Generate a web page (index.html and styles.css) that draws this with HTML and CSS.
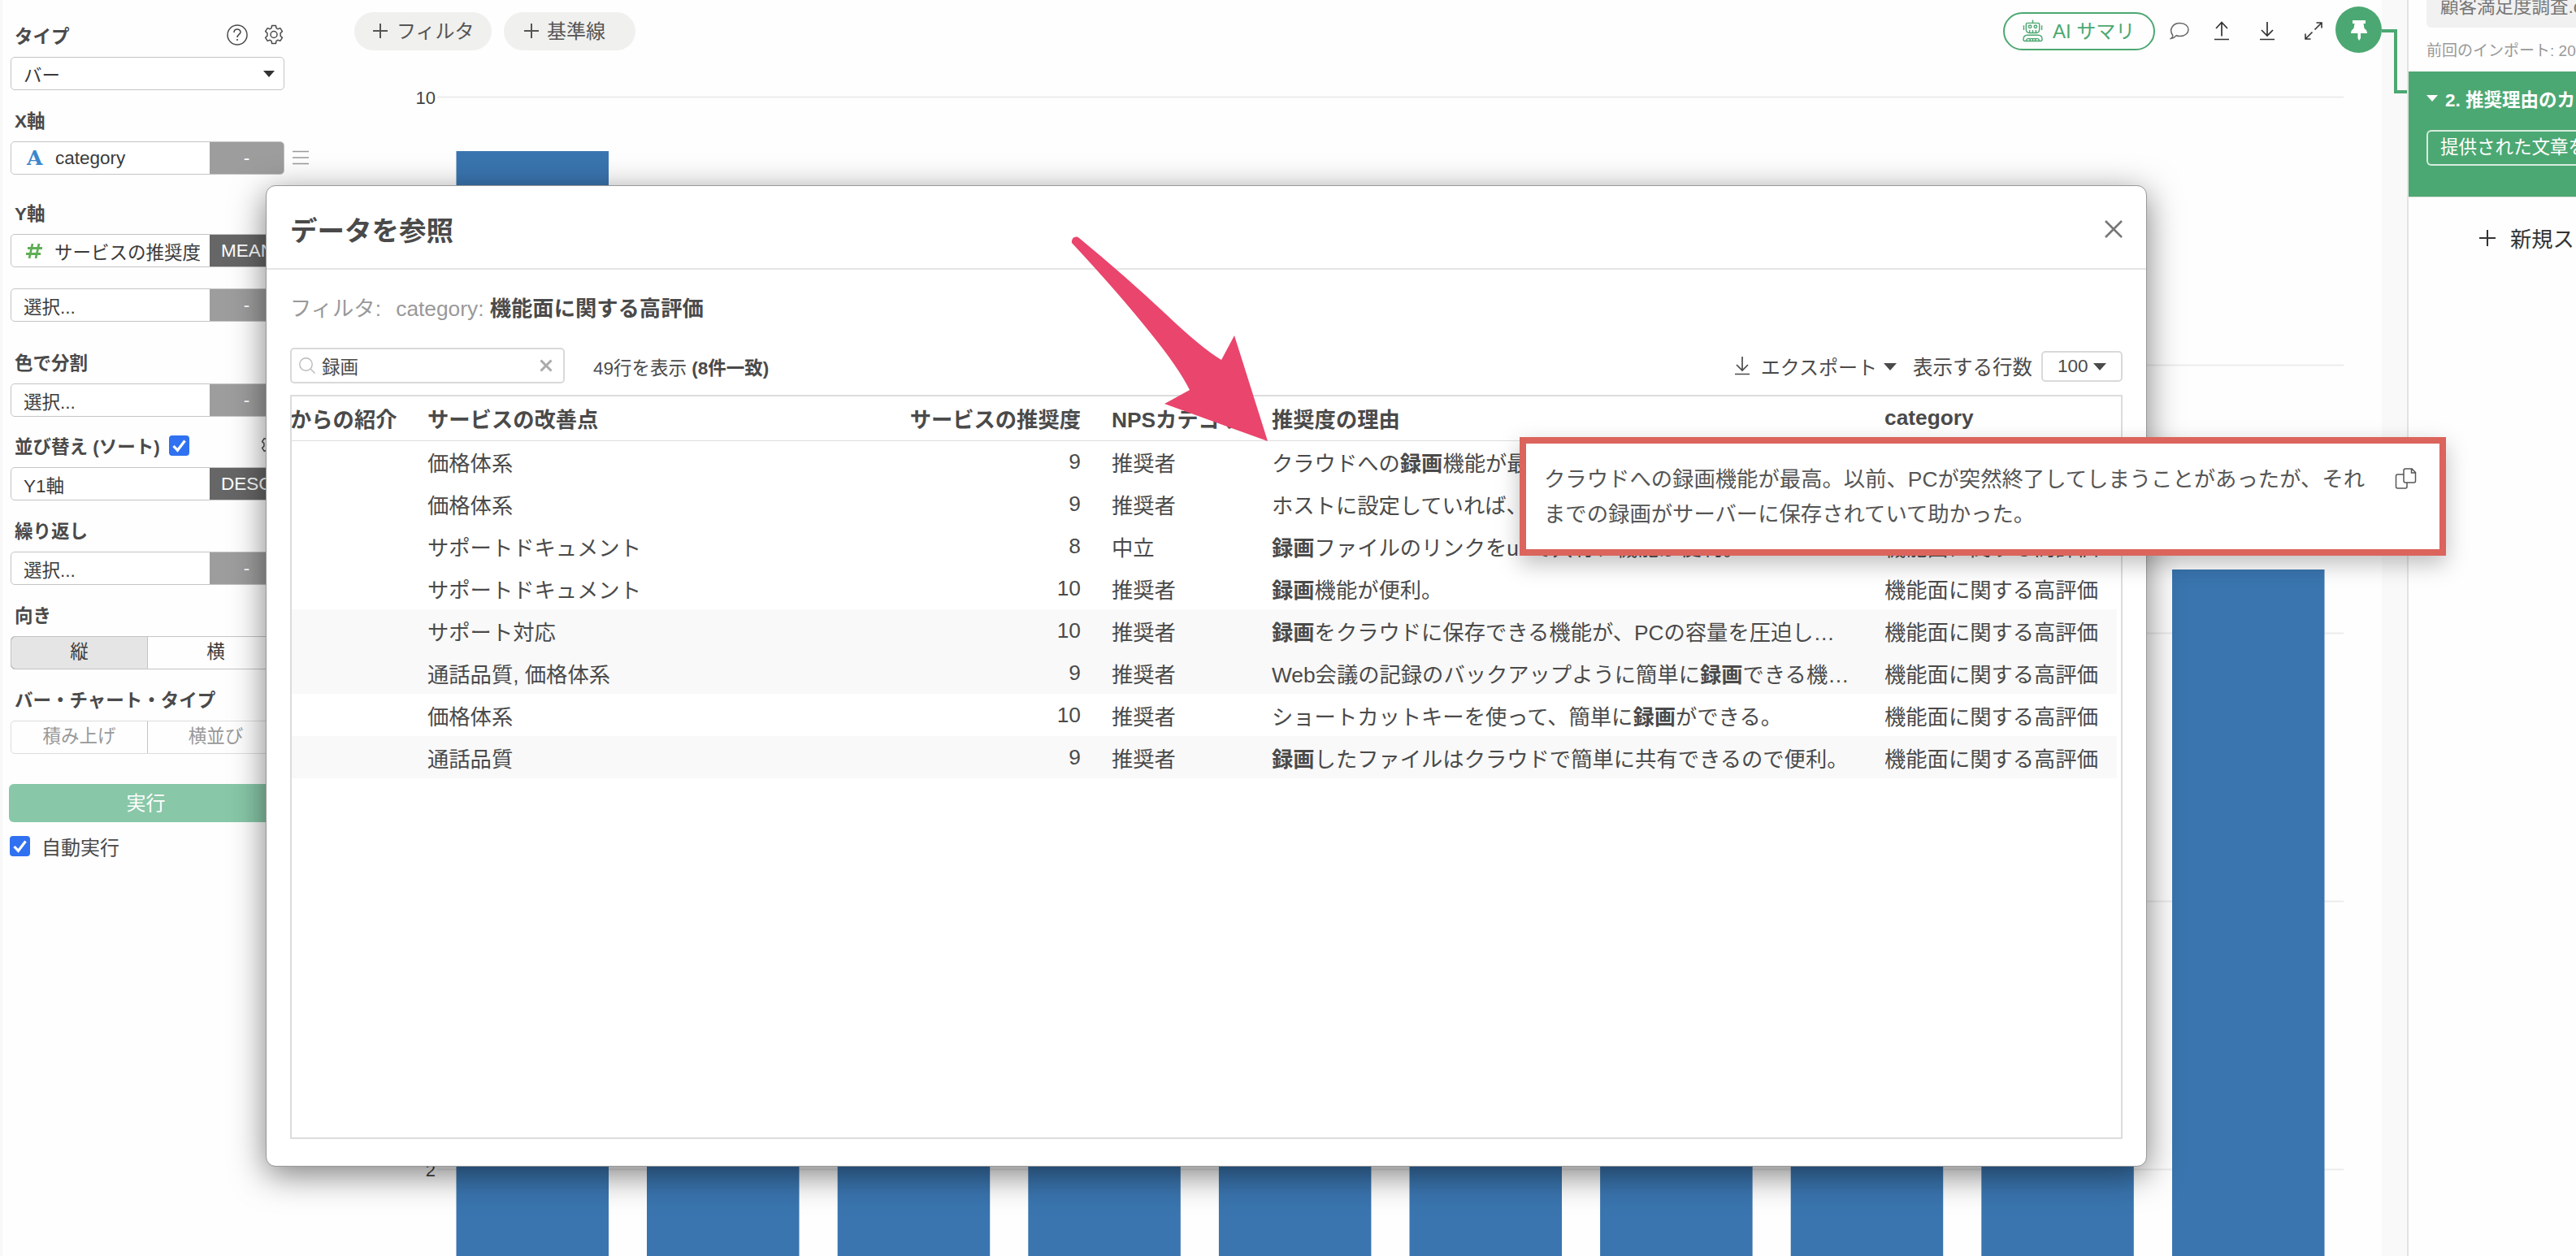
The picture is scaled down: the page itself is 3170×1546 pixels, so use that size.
FILE: index.html
```
<!DOCTYPE html>
<html lang="ja">
<head>
    <meta charset="UTF-8">
    <meta name="viewport" content="width=device-width, initial-scale=1.0">
    <title>データを参照</title>

    <link rel="stylesheet" href="styles.css">
</head>
<body>
    <svg width="0" height="0" class="defs">
        <symbol id="gear" viewBox="0 0 26 26">
            <path d="M10.6 1.5h4.8l.6 3.2 1.8 1 3-1.1 2.6 4-2.3 2.2v3.400l2.300 2.200-2.600 4-3-1.100-1.800 1-.6 3.200h-4.800l-.6-3.200-1.800-1-3 1.100-2.600-4 2.300-2.200v-3.400L2.600 8.600l2.600-4 3 1.100 1.800-1z" fill="none" stroke="currentColor" stroke-width="1.5" stroke-linejoin="round"/>
            <circle cx="13" cy="12.500" r="4" fill="none" stroke="currentColor" stroke-width="1.5"/>
        </symbol>
        <symbol id="download" viewBox="0 0 20 24">
            <path d="M10 1v17M3 11l7 7 7-7M1 22.500h18" fill="none" stroke="currentColor" stroke-width="1.7"/>
        </symbol>
        <symbol id="check" viewBox="0 0 25 25">
            <path d="M5.500 13l5 5.200L19.500 6.500" fill="none" stroke="#fff" stroke-width="3.200"/>
        </symbol>
    </svg>

    <main class="app">
        <aside class="sidebar">
            <div class="field">
                <div class="label">タイプ
                    <span class="tools">
                        <svg width="26" height="26" viewBox="0 0 26 26"><circle cx="13" cy="13" r="12" fill="none" stroke="currentColor" stroke-width="1.5"/><path d="M9 10c0-5.300 8-5.300 8-.5 0 3-4 3-4 6.500M13 18v2" fill="none" stroke="currentColor" stroke-width="1.600"/></svg>
                        <svg width="26" height="26"><use href="#gear"/></svg>
                    </span>
                </div>
                <div class="box"><span class="value">バー</span><i class="caret"></i></div>
            </div>
            <div class="field">
                <div class="label">X軸</div>
                <div class="line">
                    <div class="box"><span class="value type"><b class="text-icon">A</b>category</span><span class="func">-</span></div>
                    <svg class="menu" width="20" height="18"><path d="M0 1.500h20M0 9h20M0 16.500h20" stroke="#999" stroke-width="1.500"/></svg>
                </div>
            </div>
            <div class="field y-axis">
                <div class="label">Y軸</div>
                <div class="box"><span class="value type"><svg class="hash" width="20" height="20"><path d="M8 1L4 19M16 1l-4 18M2 6.500h18M0 13.500h18" stroke="#5fae57" stroke-width="2.800"/></svg>サービスの推奨度</span><span class="func dark">MEAN</span></div>
            </div>
            <div class="field y-extra">
                <div class="box"><span class="value">選択...</span><span class="func">-</span></div>
            </div>
            <div class="field color">
                <div class="label">色で分割</div>
                <div class="box"><span class="value">選択...</span><span class="func">-</span></div>
            </div>
            <div class="field sort">
                <div class="label">並び替え (ソート)<svg class="checkbox" width="25" height="25"><use href="#check"/></svg>
                    <span class="tools"><svg width="26" height="26"><use href="#gear"/></svg></span>
                </div>
                <div class="box"><span class="value">Y1軸</span><span class="func dark">DESC</span></div>
            </div>
            <div class="field">
                <div class="label">繰り返し</div>
                <div class="box"><span class="value">選択...</span><span class="func">-</span></div>
            </div>
            <div class="field">
                <div class="label">向き</div>
                <div class="toggle"><span class="active">縦</span><span>横</span></div>
            </div>
            <div class="field">
                <div class="label">バー・チャート・タイプ</div>
                <div class="toggle disabled"><span>積み上げ</span><span>横並び</span></div>
            </div>
            <div class="run">実行</div>
            <div class="auto"><svg class="checkbox" width="25" height="25"><use href="#check"/></svg>自動実行</div>
        </aside>

        <section class="chart">
            <div class="toolbar">
                <div class="pill"><svg width="18" height="18"><path d="M9 0v18M0 9h18" stroke="currentColor" stroke-width="2"/></svg><span>フィルタ</span></div>
                <div class="pill wide"><svg width="18" height="18"><path d="M9 0v18M0 9h18" stroke="currentColor" stroke-width="2"/></svg><span>基準線</span></div>
                <div class="actions">
                    <div class="summary">
                        <svg width="25" height="28" viewBox="0 0 26 28" fill="none" stroke="currentColor" stroke-width="1.500">
                            <path d="M13 0v4M1.500 7v6M24.500 7v6"/>
                            <path d="M6 4h14q1.500 0 1.500 1.500V12q0 4.500-4 4.500h-9q-4 0-4-4.500V5.500Q4.500 4 6 4z"/>
                            <circle cx="9.500" cy="8.500" r="1.800"/><circle cx="16.500" cy="8.500" r="1.800"/>
                            <path d="M9 13v3M13 13v3M17 13v3"/>
                            <path d="M6 19.500h14q5 0 5 5.500 0 2-2 2H3q-2 0-2-2 0-5.500 5-5.500zM5 27v-1q0-2 2-2h12q2 0 2 2v1M9.500 24v3M13 24v3M16.500 24v3"/>
                        </svg>
                        <span>AI サマリ</span>
                    </div>
                    <svg width="24" height="22" viewBox="0 0 24 22"><path d="M1.500 20.500c1.500-1 2.600-2.500 2.200-4C-1 10 3 1.500 12.500 1.500c14 0 14 16 0 16-1.600 0-3-.3-4.300-.8-1.600 1.800-4 3.600-6.700 3.800z" fill="none" stroke="#666" stroke-width="1.500"/></svg>
                    <svg width="20" height="24" viewBox="0 0 20 24"><path d="M10 18.500V1.500M3 9l7-7.500L17 9M1 22.500h18" fill="none" stroke="currentColor" stroke-width="1.700"/></svg>
                    <svg width="20" height="24"><use href="#download"/></svg>
                    <svg width="24" height="24" viewBox="0 0 24 24"><path d="M13.500 10.500L22 2M15.500 2H22v6.500M10.500 13.500L2 22M2 15.500V22h6.500" fill="none" stroke="currentColor" stroke-width="1.600"/></svg>
                    <div class="pin"><svg width="20" height="26" viewBox="0 0 20 26"><path d="M2 1h16v4h-2.500l1 6q3.500 2 3.500 6h-8v6l-2 3-1.500-3v-6H0q0-4 3.500-6l1-6H2z" fill="#fff"/></svg></div>
                </div>
            </div>
            <svg class="plot" width="2440" height="1470" viewBox="491 76 2440 1470">
                <g stroke="#ececec" stroke-width="2">
                    <path d="M538 119.500H2884M538 449.500H2884M538 779.500H2884M538 1109.500H2884M538 1439.500H2884"/>
                </g>
                <g class="ticks">
                    <text x="536" y="128">10</text>
                    <text x="536" y="1448">2</text>
                </g>
                <g fill="#3a75af">
                    <rect x="561.500" y="186" width="187.500" height="1360"/>
                    <rect x="796" y="900" width="187.500" height="646"/>
                    <rect x="1030.700" y="900" width="187.500" height="646"/>
                    <rect x="1265.300" y="900" width="187.500" height="646"/>
                    <rect x="1499.900" y="900" width="187.500" height="646"/>
                    <rect x="1734.500" y="900" width="187.500" height="646"/>
                    <rect x="1969.100" y="900" width="187.500" height="646"/>
                    <rect x="2203.700" y="900" width="187.500" height="646"/>
                    <rect x="2438.300" y="900" width="187.500" height="646"/>
                    <rect x="2673" y="701" width="187.500" height="845"/>
                </g>
            </svg>
        </section>

        <div class="gutter">
            <svg width="31" height="80"><path d="M0 3h17v75h14" fill="none" stroke="#4ca872" stroke-width="4"/></svg>
        </div>

        <aside class="steps">
            <div class="source">顧客満足度調査.csv</div>
            <div class="imported">前回のインポート: 2024</div>
            <div class="step">
                <div class="step-title"><i class="caret"></i>2. 推奨理由のカテゴリ</div>
                <div class="step-body">提供された文章を分類</div>
            </div>
            <div class="new-step"><svg width="20" height="20"><path d="M10 0v20M0 10h20" stroke="currentColor" stroke-width="2"/></svg>新規ステップ</div>
        </aside>
    </main>

    <div class="modal">
        <div class="modal-header">
            <h1>データを参照</h1>
            <svg width="22" height="22"><path d="M1 1l20 20M21 1L1 21" stroke="#777" stroke-width="2.600"/></svg>
        </div>
        <div class="modal-body">
            <div class="filter">フィルタ: <span>category:</span> <b>機能面に関する高評価</b></div>
            <div class="controls">
                <div class="search">
                    <svg width="20" height="20"><circle cx="8.500" cy="8.500" r="7.700" fill="none" stroke="#bbb" stroke-width="1.400"/><path d="M14 14l5.500 5.500" stroke="#bbb" stroke-width="1.400"/></svg>
                    <span>録画</span>
                    <svg width="16" height="16"><path d="M1.500 1.500l13 13M14.500 1.500l-13 13" stroke="#aaa" stroke-width="3"/></svg>
                </div>
                <div class="count">49行を表示 <b>(8件一致)</b></div>
                <div class="export"><svg width="20" height="24"><use href="#download"/></svg>エクスポート<i class="caret"></i></div>
                <div class="rows-label">表示する行数</div>
                <div class="rows">100<i class="caret"></i></div>
            </div>
            <div class="grid">
                <table>
                    <colgroup><col class="c1"><col class="c2"><col class="c3"><col class="c4"><col class="c5"><col class="c6"></colgroup>
                    <thead>
                        <tr><th class="first">からの紹介</th><th>サービスの改善点</th><th class="num">サービスの推奨度</th><th>NPSカテゴリ</th><th>推奨度の理由</th><th>category</th></tr>
                    </thead>
                    <tbody>
                        <tr><td></td><td>価格体系</td><td class="num">9</td><td>推奨者</td><td>クラウドへの<b>録画</b>機能が最高。以前、PCが突然終了…</td><td>機能面に関する高評価</td></tr>
                        <tr><td></td><td>価格体系</td><td class="num">9</td><td>推奨者</td><td>ホストに設定していれば、<b>録画</b>が誰でもできる。</td><td>機能面に関する高評価</td></tr>
                        <tr><td></td><td>サポートドキュメント</td><td class="num">8</td><td>中立</td><td><b>録画</b>ファイルのリンクをurlで共有、機能が便利。</td><td>機能面に関する高評価</td></tr>
                        <tr><td></td><td>サポートドキュメント</td><td class="num">10</td><td>推奨者</td><td><b>録画</b>機能が便利。</td><td>機能面に関する高評価</td></tr>
                        <tr class="odd"><td></td><td>サポート対応</td><td class="num">10</td><td>推奨者</td><td><b>録画</b>をクラウドに保存できる機能が、PCの容量を圧迫し…</td><td>機能面に関する高評価</td></tr>
                        <tr class="odd"><td></td><td>通話品質, 価格体系</td><td class="num">9</td><td>推奨者</td><td>Web会議の記録のバックアップように簡単に<b>録画</b>できる機…</td><td>機能面に関する高評価</td></tr>
                        <tr><td></td><td>価格体系</td><td class="num">10</td><td>推奨者</td><td>ショートカットキーを使って、簡単に<b>録画</b>ができる。</td><td>機能面に関する高評価</td></tr>
                        <tr class="odd"><td></td><td>通話品質</td><td class="num">9</td><td>推奨者</td><td><b>録画</b>したファイルはクラウドで簡単に共有できるので便利。</td><td>機能面に関する高評価</td></tr>
                    </tbody>
                </table>
            </div>
        </div>
    </div>

    <div class="popover">
        <p>クラウドへの録画機能が最高。以前、PCが突然終了してしまうことがあったが、それ<br>までの録画がサーバーに保存されていて助かった。</p>
        <svg width="27" height="27" viewBox="0 0 27 27" fill="none" stroke="#555" stroke-width="1.500"><path d="M13 1h8l4.500 4.500V16q0 2-2 2H13q-2 0-2-2V3q0-2 2-2zM20.500 1v5h5M11 8H3.500q-2 0-2 2v13q0 2 2 2H13q2 0 2-2v-5"/></svg>
    </div>

    <svg class="arrow" width="250" height="260" viewBox="1315 288 250 260">
        <path d="M1319 299c-1-5 4-10 9-6Q1385 340 1434 386 1478 428 1503 443L1519 413 1560 543 1433 497 1464 480Q1450 452 1415 409 1375 359 1319 299z" fill="#ea456c"/>
    </svg>
</body>
</html>
```

FILE: styles.css
```
*{
    box-sizing: border-box;
}
body{
    margin: 0px;
    width: 3170px;
    height: 1546px;
    overflow: hidden;
    position: relative;
    background-color: #fefefe;
    color: #4a4a4a;
    font-family: "Liberation Sans", "Noto Sans CJK JP", sans-serif;
    font-size: 22.5px;
}
svg{
    display: block;
    flex: none;
}
.defs{
    position: absolute;
}
.app{
    display: flex;
    height: 1546px;
}
.caret{
    border: 7px solid transparent;
    border-top: 8px solid #333;
    border-bottom: 0px;
}

/* left settings */
.sidebar{
    width: 436px;
    padding: 30px 0px 0px 10px;
    border-left: 3px solid #f8f8f8;
    display: flex;
    flex-direction: column;
    flex: none;
    gap: 24px;
}
.field{
    width: 337px;
}
.label{
    display: flex;
    align-items: center;
    height: 26px;
    margin-bottom: 14px;
    padding-left: 5px;
    font-weight: bold;
    white-space: nowrap;
}
.tools{
    display: flex;
    gap: 19px;
    margin-left: auto;
}
.sort .tools{
    margin-right: 4px;
}
.line{
    display: flex;
    align-items: center;
    gap: 10px;
}
.box{
    display: flex;
    align-items: center;
    width: 337px;
    height: 41px;
    margin-bottom: -1px;
    flex: none;
    border: 1.5px solid #c4c4c4;
    border-radius: 5px;
    background-color: #fff;
    color: #3a3a3a;
    overflow: hidden;
}
.box .caret{
    margin: 0px 11px 0px auto;
}
.value{
    display: flex;
    align-items: center;
    padding-left: 15px;
    width: 244px;
    flex: none;
    white-space: nowrap;
}
.type{
    padding-left: 18px;
}
.text-icon{
    width: 36px;
    padding-left: 1px;
    color: #3b86cc;
    font-family: "DejaVu Serif", serif;
    font-size: 25px;
}
.hash{
    margin-right: 15px;
}
.func{
    width: 93px;
    line-height: 42px;
    background-color: #9d9d9d;
    color: #fff;
    text-align: center;
}
.func.dark{
    background-color: #666;
    text-align: left;
    padding-left: 14px;
}
.y-axis{
    margin-top: 10px;
}
.y-extra{
    margin-top: 3px;
}
.color{
    margin-top: 13px;
}
.sort{
    margin-top: -1px;
}
.checkbox{
    background-color: #2f71f1;
    border-radius: 4px;
}
.label .checkbox{
    margin-left: 11px;
}
.toggle{
    display: flex;
    height: 41px;
    margin-bottom: -1px;
    line-height: 38px;
    border: 1.5px solid #c4c4c4;
    border-radius: 5px;
    text-align: center;
    overflow: hidden;
    color: #3a3a3a;
}
.toggle span{
    flex: 1;
}
.toggle span + span{
    border-left: 1.5px solid #c4c4c4;
}
.toggle .active{
    background-color: #e5e5e5;
    box-shadow: 0px 0px 0px 1px #999;
    border-radius: 5px 0px 0px 5px;
}
.disabled{
    color: #999;
    border-color: #ddd;
}
.run{
    width: 337px;
    margin: 14px 0px 0px -2px;
    height: 47px;
    line-height: 47px;
    border-radius: 6px;
    background-color: #88c7a8;
    color: #fff;
    font-size: 24px;
    text-align: center;
}
.auto{
    display: flex;
    align-items: center;
    gap: 14px;
    margin: -12px 0px 0px -1px;
    font-size: 24px;
}

/* chart */
.chart{
    width: 2495px;
    flex: none;
}
.toolbar{
    display: flex;
    align-items: center;
    gap: 15px;
    height: 76px;
    position: relative;
}
.pill{
    display: flex;
    align-items: center;
    gap: 11px;
    width: 169px;
    height: 47px;
    padding-left: 23px;
    border-radius: 24px;
    background-color: #f0f0ee;
    font-size: 24px;
    white-space: nowrap;
    color: #555;
}
.pill span,.summary span{
    padding-bottom: 3px;
}
.wide{
    width: 162px;
    padding-left: 25px;
    gap: 10px;
}
.actions{
    display: flex;
    align-items: center;
    margin-left: auto;
    color: #333;
}
.summary{
    display: flex;
    align-items: center;
    gap: 12px;
    width: 187px;
    height: 47px;
    margin-right: 18px;
    padding-left: 22px;
    border: 2px solid #4ca872;
    border-radius: 24px;
    color: #4ca872;
    font-size: 24px;
    white-space: nowrap;
}
.actions > svg{
    margin-right: 35px;
}
.actions > svg:nth-child(2){
    margin-right: 30px;
}
.actions > svg:nth-child(3){
    margin-right: 36px;
}
.actions > svg:nth-last-child(2){
    margin-right: 15px;
}
.pin{
    display: flex;
    align-items: center;
    justify-content: center;
    width: 57px;
    height: 57px;
    margin-bottom: 3px;
    border-radius: 50%;
    background-color: #4ca872;
}
.plot{
    margin-left: 55px;
}
.ticks{
    font-size: 22px;
    text-anchor: end;
    fill: #444;
}
.gutter{
    width: 31px;
    flex: none;
    padding-top: 35px;
    background-color: #f9f9f9;
}

/* right steps */
.steps{
    flex: 1;
    min-width: 0px;
    overflow: hidden;
    white-space: nowrap;
    border-left: 2px solid #e3e3e3;
}
.source{
    height: 34px;
    line-height: 18px;
    margin-left: 22px;
    padding-left: 17px;
    border-radius: 0px 0px 0px 6px;
    background-color: #f1f1f1;
    color: #777;
}
.imported{
    height: 54px;
    line-height: 58px;
    margin-left: 22px;
    color: #999;
    font-size: 19px;
}
.step{
    height: 155px;
    padding: 18px 0px 0px 22px;
    background-color: #4ca872;
    border-bottom: 1px solid #ddd;
    color: #fff;
}
.step-title{
    display: flex;
    align-items: center;
    height: 30px;
    font-weight: bold;
}
.step-title .caret{
    margin-right: 9px;
    border-top-color: #fff;
}
.step-body{
    height: 44px;
    line-height: 39px;
    margin-top: 24px;
    padding-left: 15px;
    border: 2px solid #d7ecdf;
    border-right: 0px;
    border-radius: 6px 0px 0px 6px;
}
.new-step{
    display: flex;
    align-items: center;
    gap: 18px;
    margin-left: 87px;
    height: 99px;
    font-size: 26.3px;
    color: #333;
}

/* dialog */
.modal{
    position: absolute;
    left: 327px;
    top: 228px;
    width: 2315px;
    height: 1208px;
    border: 1px solid #999;
    border-radius: 12px;
    background-color: #fff;
    background-clip: padding-box;
    box-shadow: 0px 10px 42px rgba(0,0,0,0.5);
    color: #4a4a4a;
    font-size: 26.3px;
}
.modal-header{
    display: flex;
    justify-content: space-between;
    align-items: center;
    height: 103px;
    padding: 4px 29px 0px 29px;
    border-bottom: 2px solid #e5e5e5;
}
h1{
    margin: 0px;
    font-size: 33.5px;
}
.modal-body{
    padding: 0px 29px;
}
.filter{
    height: 96px;
    line-height: 97px;
    color: #999;
    white-space: nowrap;
}
.filter span{
    margin-left: 11px;
}
.filter b{
    color: #4a4a4a;
}
.controls{
    display: flex;
    align-items: center;
    height: 44px;
    font-size: 24.5px;
}
.search{
    display: flex;
    align-items: center;
    width: 338px;
    height: 44px;
    padding: 0px 13px 0px 9px;
    border: 2px solid #d9d9d9;
    border-radius: 5px;
    font-size: 22.5px;
}
.search span{
    flex: 1;
    margin-left: 8px;
}
.count{
    margin-left: 35px;
    padding-top: 1px;
    font-size: 22.5px;
}
.export{
    display: flex;
    align-items: center;
    margin-left: auto;
    font-size: 24px;
}
.export svg{
    margin-right: 13px;
}
.modal .caret{
    border-width: 9px 8px 0px 8px;
    border-top-color: #4a4a4a;
}
.export .caret{
    margin: 2px 0px 0px 8px;
}
.rows-label{
    margin-left: 20px;
    padding-top: 1px;
}
.rows{
    display: flex;
    align-items: center;
    width: 100px;
    height: 38px;
    margin: 2px 0px 0px 11px;
    padding-left: 18px;
    border: 2px solid #d9d9d9;
    border-radius: 5px;
    font-size: 22.5px;
}
.rows .caret{
    margin-left: 6px;
}
.grid{
    height: 916px;
    margin-top: 14px;
    border: 2px solid #dcdcdc;
    overflow: hidden;
}
table{
    width: 2251px;
    table-layout: fixed;
    border-collapse: collapse;
}
.c1{
    width: 148px;
}
.c2{
    width: 520px;
}
.c3{
    width: 322px;
}
.c4{
    width: 197px;
}
.c5{
    width: 754px;
}
.c6{
    width: 310px;
}
th,td{
    padding: 0px 19px;
    text-align: left;
    white-space: nowrap;
    overflow: hidden;
}
th{
    height: 54px;
    border-bottom: 1.5px solid #ddd;
}
/* scrolled sideways, so the name starts under the left edge */
th.first{
    padding: 0px;
    text-indent: -2px;
}
td{
    height: 52px;
}
.num{
    text-align: right;
}
.odd td{
    background-color: #f9f9f9;
}
.odd td:last-child{
    border-right: 10px solid #fff;
}

/* cell text in full */
.popover{
    display: flex;
    justify-content: space-between;
    position: absolute;
    left: 1870px;
    top: 538px;
    width: 1140px;
    height: 146px;
    padding: 23px 28px 0px 22px;
    border: 8px solid #db645c;
    background-color: #fff;
    box-shadow: 0px 10px 26px rgba(0,0,0,0.25);
    color: #555;
    font-size: 26.35px;
    line-height: 43px;
}
.popover p{
    margin: 0px;
    white-space: nowrap;
}
.popover svg{
    margin-top: 7px;
}
.arrow{
    position: absolute;
    left: 1315px;
    top: 288px;
}
```
